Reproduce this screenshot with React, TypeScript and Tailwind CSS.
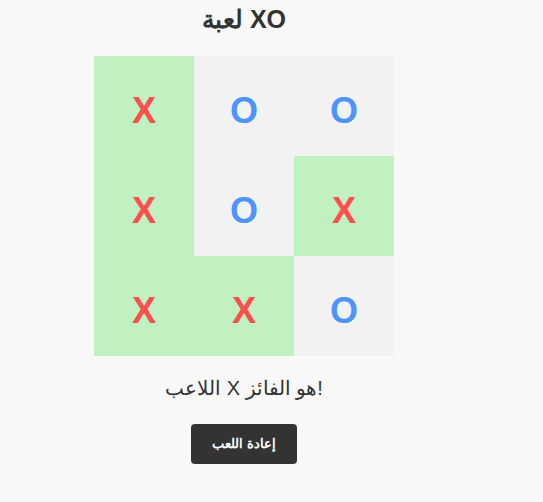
import React from "react";

const board = ["X", "O", "O", "X", "O", "X", "X", "X", "O"];

export default function App() {
  return (
    <div
      className="min-h-screen bg-[#f8f8f8] text-[#333]"
      style={{ fontFamily: '"Liberation Sans", Arial, sans-serif' }}
    >
      <div className="w-[488px] flex flex-col items-center">
        <h1 className="mt-[5px] text-[25px] leading-[29px] font-bold text-[#333]">لعبة XO</h1>
        <div className="mt-[22px] grid grid-cols-3 w-[300px]">
          {board.map((v, i) => (
            <div
              key={i}
              className={
                v === "X"
                  ? "h-[100px] pt-[10px] flex items-center justify-center bg-[#c1f0c1] text-[36px] font-bold text-[#ff4d4d]"
                  : "h-[100px] pt-[10px] flex items-center justify-center bg-[#f2f2f2] text-[36px] font-bold text-[#4d94ff]"
              }
            >
              {v}
            </div>
          ))}
        </div>
        <p className="mt-[21px] text-[20px] leading-[23px] text-[#333]">اللاعب X هو الفائز!</p>
        <button className="mt-[24px] w-[106px] h-[40px] rounded-[4px] bg-[#333] text-white text-[13px] font-bold">
          إعادة اللعب
        </button>
      </div>
    </div>
  );
}
